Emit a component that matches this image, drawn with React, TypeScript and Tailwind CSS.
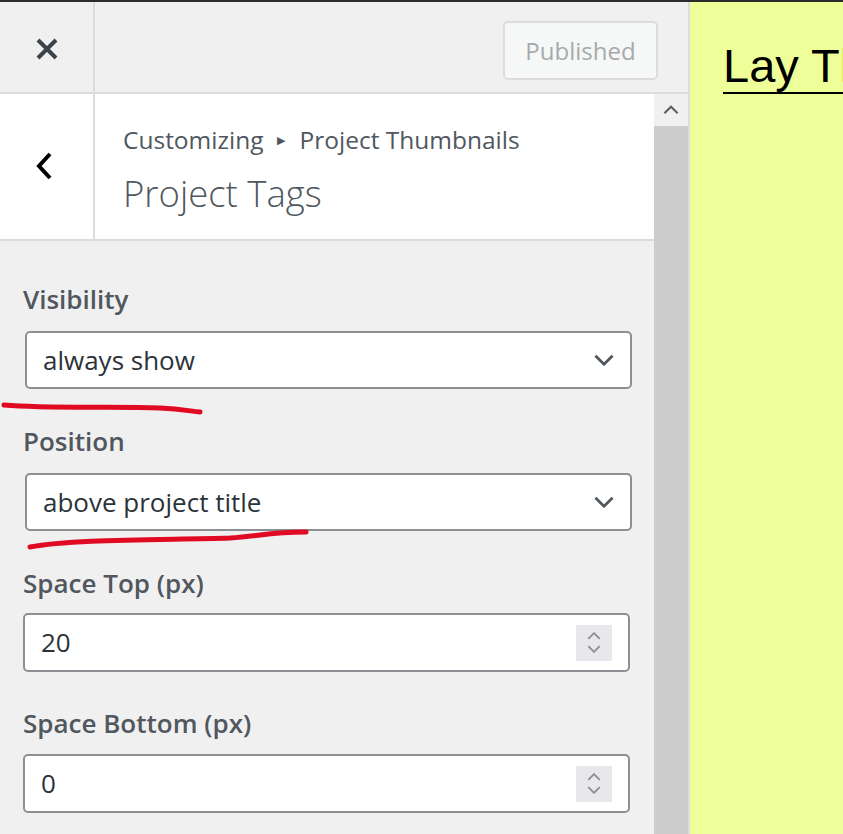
const font = { fontFamily: '"Open Sans", "Noto Sans", sans-serif' };

const Chevron = ({ up = false, className = "" }: { up?: boolean; className?: string }) => (
  <svg viewBox="0 0 24 14" className={className} fill="none" stroke="currentColor" strokeWidth="3.2">
    <path d={up ? "M2 12 L12 2 L22 12" : "M2 2 L12 12 L22 2"} />
  </svg>
);

const SelectBox = ({ value }: { value: string }) => (
  <div className="ml-[25px] w-[607px] h-[58px] bg-white border-2 border-[#8c8f94] rounded-[5px] flex items-center justify-between pl-[16px] pr-[15px]">
    <span className="text-[26px] text-[#2c3338]">{value}</span>
    <Chevron className="w-[22px] h-[12px] text-[#50575e]" />
  </div>
);

const NumberBox = ({ value }: { value: string }) => (
  <div className="ml-[23px] w-[607px] h-[59px] bg-white border-2 border-[#8c8f94] rounded-[5px] flex items-center justify-between pl-[16px] pr-[16px]">
    <span className="text-[26px] text-[#2c3338]">{value}</span>
    <div className="w-[36px] h-[36px] bg-[#e8e8ec] flex flex-col items-center justify-center gap-[5px]">
      <Chevron up className="w-[14px] h-[8px] text-[#8c8f94]" />
      <Chevron className="w-[14px] h-[8px] text-[#8c8f94]" />
    </div>
  </div>
);

const Label = ({ children, className = "" }: { children: string; className?: string }) => (
  <div className={`pl-[23px] text-[26px] leading-[30px] font-semibold text-[#50575e] ${className}`}>{children}</div>
);

export default function App() {
  return (
    <div className="w-[843px] h-[834px] overflow-hidden flex flex-col bg-[#eeff99]" style={font}>
      <div className="h-[2px] bg-[#2c2c2c] shrink-0" />
      <div className="flex flex-1 min-h-0">
        <div className="w-[690px] shrink-0 flex flex-col bg-[#f0f0f0] border-r-2 border-[#dcdcde]">
          {/* top bar */}
          <div className="h-[92px] shrink-0 flex border-b-2 border-[#dcdcde]">
            <div className="w-[95px] border-r-2 border-[#dcdcde] flex items-center justify-center pt-[3px]">
              <svg viewBox="0 0 22 22" className="w-[22px] h-[22px]" stroke="#3c434a" strokeWidth="4">
                <path d="M2 2 L20 20 M20 2 L2 20" />
              </svg>
            </div>
            <div className="flex-1 flex items-start justify-end pt-[19px] pr-[30px]">
              <div className="w-[155px] h-[59px] rounded-[5px] border-2 border-[#dcdcde] bg-[#f6f7f7] flex items-center justify-center text-[24px] text-[#a7aaad]">
                Published
              </div>
            </div>
          </div>

          <div className="flex flex-1 min-h-0">
            {/* scroll content */}
            <div className="w-[654px] shrink-0 flex flex-col">
              <div className="h-[147px] shrink-0 bg-white flex border-b-2 border-[#dcdcde]">
                <div className="w-[95px] border-r-2 border-[#dcdcde] flex items-center justify-center pr-[5px] pb-[2px]">
                  <svg viewBox="0 0 16 28" className="w-[16px] h-[28px]" fill="none" stroke="#000" strokeWidth="4">
                    <path d="M14 2 L3 14 L14 26" />
                  </svg>
                </div>
                <div className="pl-[28px] pt-[30px] text-[#50575e]">
                  <div className="text-[24.5px] leading-[32px] flex items-center">
                    Customizing
                    <span className="mx-[14px] text-[11px]">&#9654;</span>
                    Project Thumbnails
                  </div>
                  <div className="text-[36.5px] leading-[46px] font-light mt-[14px]">Project Tags</div>
                </div>
              </div>

              <div className="relative flex flex-col">
                <Label className="mt-[43px] mb-[17px]">Visibility</Label>
                <SelectBox value="always show" />
                <Label className="mt-[37px] mb-[17px]">Position</Label>
                <SelectBox value="above project title" />
                <Label className="mt-[37px] mb-[15px]">Space Top (px)</Label>
                <NumberBox value="20" />
                <Label className="mt-[36px] mb-[16px]">Space Bottom (px)</Label>
                <NumberBox value="0" />

                {/* hand-drawn annotations */}
                <svg className="absolute left-0 top-0 w-[654px] h-[320px] pointer-events-none" viewBox="0 0 654 320" fill="none">
                  <path d="M4 164 C 50 168, 120 165, 160 167 C 180 168, 190 170, 200 171" stroke="#e00b23" strokeWidth="5" strokeLinecap="round" />
                  <path d="M30 306 C 70 298, 160 299, 230 297 C 260 295, 270 291, 306 291" stroke="#e00b23" strokeWidth="5" strokeLinecap="round" />
                </svg>
              </div>
            </div>

            {/* scrollbar */}
            <div className="w-[34px] shrink-0 flex flex-col">
              <div className="h-[32px] bg-[#f0f0f0] flex items-center justify-center">
                <Chevron up className="w-[16px] h-[10px] text-[#606060]" />
              </div>
              <div className="flex-1 bg-[#cdcdcd]" />
            </div>
          </div>
        </div>

        {/* preview */}
        <div className="flex-1 min-w-0 pl-[33px] pt-[34px] overflow-hidden">
          <div className="whitespace-nowrap text-[47px] leading-[60px] text-black underline decoration-2 underline-offset-[10px]" style={{ fontFamily: '"Liberation Sans", Arial, sans-serif' }}>
            Lay Theme
          </div>
        </div>
      </div>
    </div>
  );
}
